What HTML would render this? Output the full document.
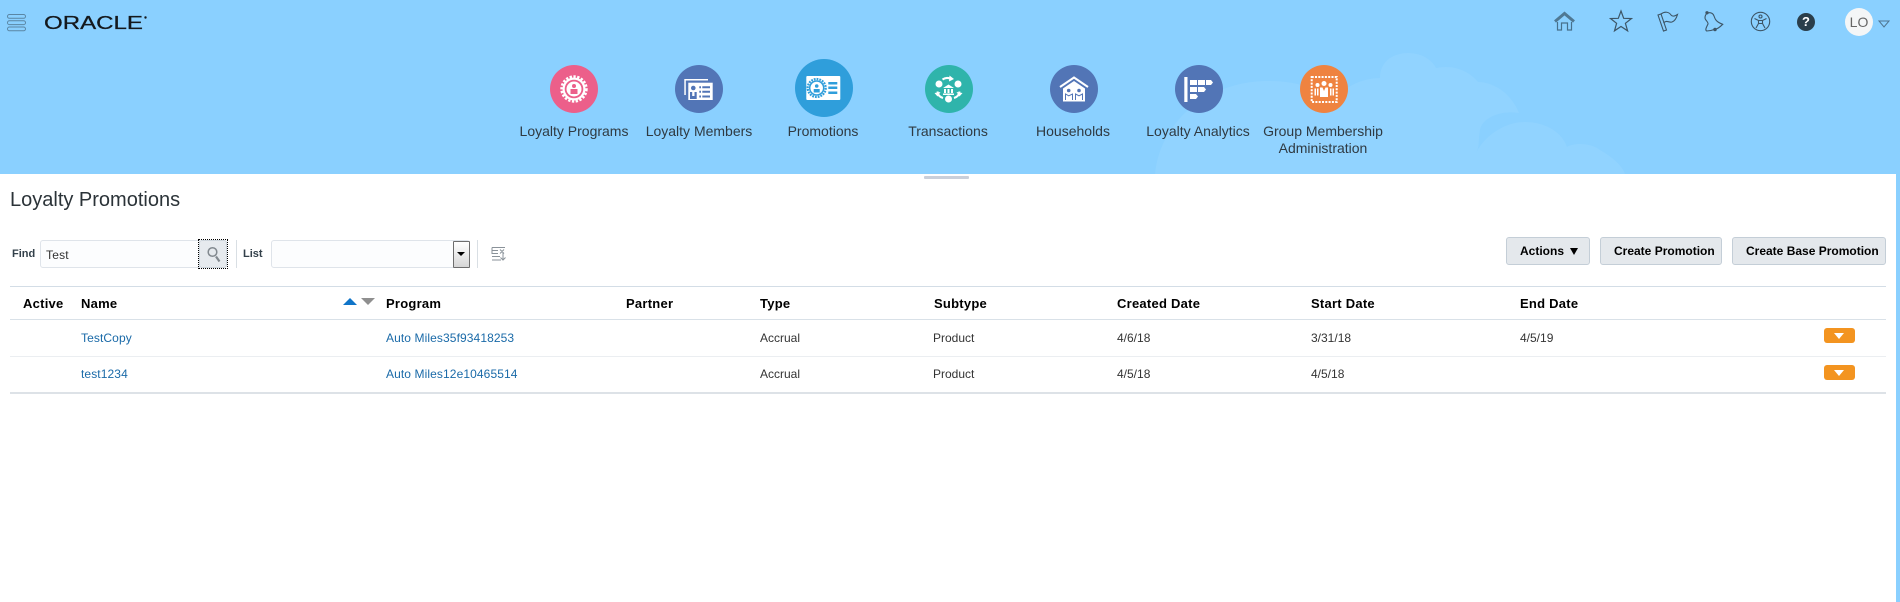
<!DOCTYPE html>
<html><head><meta charset="utf-8"><title>Loyalty Promotions</title>
<style>
html,body{margin:0;padding:0;width:1900px;height:602px;overflow:hidden;background:#fff}
body{position:relative;font-family:"Liberation Sans",Arial,sans-serif;color:#333}
.a{position:absolute;white-space:nowrap}
.nav{position:absolute;top:123px;width:140px;text-align:center;font-size:14px;line-height:17px;color:#2f3a42}
.c{position:absolute;border-radius:50%;width:48px;height:48px;top:65px}
.c svg{position:absolute;left:0;top:0}
.th{position:absolute;top:296px;font-size:13px;letter-spacing:.25px;font-weight:bold;line-height:16px;color:#000;white-space:nowrap}
.td{position:absolute;font-size:12px;line-height:14px;color:#333;white-space:nowrap}
.l{color:#1a6aa8;letter-spacing:.1px}
.hl{position:absolute;left:10px;width:1876px}
.btn{position:absolute;top:237px;height:26px;border:1px solid #c4ced7;border-radius:3px;background:#e4e8ec;font-size:12px;font-weight:bold;color:#000;line-height:26px;text-align:left;white-space:nowrap}
.btn span.t{margin-left:13px}
.mn{position:absolute;left:1824px;width:31px;height:15px;background:#f39420;border-radius:3px}
.mn:after{content:"";position:absolute;left:10px;top:5px;border-left:5.5px solid transparent;border-right:5.5px solid transparent;border-top:6px solid #fff}
</style></head><body>
<div class="a" style="left:0;top:0;width:1900px;height:174px;background:#8ad0ff;overflow:hidden">
<svg width="1900" height="174" style="position:absolute;left:0;top:0">
<path fill="#91d3ff" d="M1155 174C1160 120 1210 81 1268 81C1300 81 1320 90 1335 100C1345 85 1365 78 1380 78C1380 60 1395 53 1408 53C1422 53 1432 60 1436 68C1455 64 1470 72 1478 82C1495 82 1512 95 1519 113C1500 110 1482 118 1480 130C1478 140 1480 146 1476 153C1485 135 1505 122 1525 122C1545 122 1562 132 1567 147C1572 143 1590 142 1600 150C1612 157 1622 165 1625 174Z"/>
</svg>
</div>
<!-- hamburger -->
<svg class="a" style="left:7px;top:14px" width="20" height="18" fill="none" stroke="#5a86a4" stroke-width="1"><rect x=".5" y=".5" width="18" height="3.800" rx="1.900"/><rect x=".5" y="6.800" width="18" height="3.800" rx="1.900"/><rect x=".5" y="13" width="18" height="3.800" rx="1.900"/></svg>
<svg class="a" style="left:43px;top:12px" width="108" height="22"><text x="1" y="17" font-family="Liberation Sans" font-size="18" fill="#14181c" stroke="#14181c" stroke-width=".25" textLength="99" lengthAdjust="spacingAndGlyphs">ORACLE</text><circle cx="102.500" cy="5.500" r="1.200" fill="#14181c"/></svg>
<!-- top icons -->
<svg class="a" style="left:1550px;top:8px" width="30" height="26" fill="none" stroke="#47708c" stroke-width="1.200"><path d="M5 13.500 14.500 5.500 24 13.500" stroke-width="3" stroke="#4f7893"/><path d="M7.500 14v8h4v-7h6v7h4v-8"/></svg>
<svg class="a" style="left:1609px;top:9px" width="24" height="24" fill="none" stroke="#3d5566" stroke-width="1.200"><path d="M12 2l2.700 7.300 7.800.2-6.100 4.800 2.200 7.500-6.600-4.300-6.500 4.300 2.100-7.500-6.100-4.800 7.800-.2z"/></svg>
<svg class="a" style="left:1656px;top:9px" width="26" height="25" fill="none" stroke="#3d5566" stroke-width="1.100"><path d="M2 6 5 5 10.500 21 7.500 22z"/><path d="M5 5C9 2 13 3 15 6C17 8 19 7 21.500 5.500C20.500 9 19 12 16 13C13 14 11 10.500 7.500 14"/></svg>
<svg class="a" style="left:1704px;top:9px" width="24" height="25" fill="none" stroke="#3d5566" stroke-width="1.100"><path d="M3.300 4.300C6 3 9 4 10 7C11 10 12 13 18.700 15.300C16 18 13 20 11 20.300C8 21.500 5 22 2.700 22C1 21 2 19 4 15C4.500 13 1 11 1 9C1 7 2 5 3.300 4.300Z"/><circle cx="3" cy="3.800" r="1.100" fill="#3d5566"/><circle cx="11" cy="20.500" r="1.200" fill="#3d5566"/></svg>
<svg class="a" style="left:1750px;top:11px" width="21" height="21" fill="none" stroke="#3d5566" stroke-width="1.100"><circle cx="10.500" cy="10.500" r="9.200"/><circle cx="10.500" cy="5.500" r="1.500"/><path d="M4.500 7.500 8.500 9.500h4l4-2M8.500 9.500v3l-2.500 4.500M12.500 9.500v3l2.500 4.500M8.500 12.500h4"/></svg>
<div class="a" style="left:1797px;top:13px;width:18px;height:18px;border-radius:50%;background:#2a3e4b;color:#fff;font-size:13px;font-weight:bold;line-height:18px;text-align:center">?</div>
<div class="a" style="left:1845px;top:8px;width:28px;height:28px;border-radius:50%;background:#f4f6f7;color:#666;font-size:14px;line-height:28px;text-align:center">LO</div>
<svg class="a" style="left:1878px;top:20px" width="12" height="8" fill="none" stroke="#4f7590"><path d="M1 1h10L6 7z"/></svg>

<!-- circles -->
<div class="c" style="left:550px;background:#ec5f8a"><svg width="48" height="48"><circle cx="24" cy="24" r="12.300" fill="none" stroke="#fff" stroke-width="2.800" stroke-dasharray="2.300 1.500"/><circle cx="24" cy="24" r="11.500" fill="#fff"/><circle cx="24" cy="24" r="9.300" fill="#ec5f8a"/><circle cx="24" cy="24" r="7.500" fill="#fff"/><circle cx="24" cy="21" r="2" fill="#ec5f8a"/><path d="M20.500 24h7v5h-7z" fill="#ec5f8a"/></svg></div>
<div class="c" style="left:675px;background:#5275b6"><svg width="48" height="48"><path d="M9.300 30V14H33v1.500H10.800V30z" fill="#fff"/><rect x="13.300" y="17.700" width="24.400" height="17.300" fill="#fff"/><circle cx="18.300" cy="23" r="2.300" fill="#5275b6"/><path d="M15 27h2.200v4h2.300v-4h2.200v7H15z" fill="#5275b6"/><path d="M24.300 21.300H26v2h-1.700zM27.300 21.300H35v2h-7.700zM24.300 25.800H26v2h-1.700zM27.300 25.800H35v2h-7.700zM24.300 30.500H26v2h-1.700zM27.300 30.500H35v2h-7.700z" fill="#5275b6"/></svg></div>
<div class="c" style="left:795px;top:59px;width:58px;height:58px;background:#2f9edb"><svg width="58" height="58"><rect x="11.300" y="17" width="34" height="24" rx="1" fill="#fff"/><circle cx="21.700" cy="29" r="9" fill="none" stroke="#2f9edb" stroke-width="2.200" stroke-dasharray="1.800 1"/><circle cx="21.700" cy="29" r="7" fill="none" stroke="#2f9edb" stroke-width="1.500"/><circle cx="21.700" cy="27" r="1.800" fill="#2f9edb"/><path d="M18.700 30h6v3.500h-6z" fill="#2f9edb"/><path d="M33.300 23h9v2.500h-9zM33.300 27.500h9V30h-9zM33.300 32.500h9V35h-9z" fill="#2f9edb"/></svg></div>
<div class="c" style="left:925px;background:#2fb4ab"><svg width="48" height="48"><g fill="#fff"><circle cx="14" cy="19" r="3.500"/><circle cx="33" cy="19" r="3.500"/><circle cx="23.500" cy="34" r="3.500"/><path d="M18 23l5.500-3.500L29 23zM19 24h2v4h-2zM22.500 24h2v4h-2zM26 24h2v4h-2zM18 28.500h11V30H18z"/></g><g fill="none" stroke="#fff" stroke-width="2"><path d="M17.500 14.500Q21 12 25 13.500"/><path d="M12.500 26.500Q13 31.500 18 33"/><path d="M34.500 26.500Q34 31.500 29 33"/></g><g fill="#fff"><path d="M24.500 10.500l4.500 3.500-5 2.500zM9.500 28l6-1-3 4.500zM37.500 28l-6-1 3 4.500z"/></g></svg></div>
<div class="c" style="left:1050px;background:#5275b6"><svg width="48" height="48"><path d="M10 22 24 12.500 38 22" fill="none" stroke="#fff" stroke-width="2"/><path d="M13 23.500 24 16l11 7.500V36.500H13z" fill="#fff"/><g fill="#5275b6"><circle cx="18.700" cy="25.500" r="1.800"/><circle cx="29" cy="25.500" r="1.800"/></g><g fill="none" stroke="#5275b6" stroke-width="1"><path d="M15.500 35V29l3.200 1.800L22.500 29v6M25.500 35V29l3.500 1.800L32.500 29v6"/></g></svg></div>
<div class="c" style="left:1175px;background:#5275b6"><svg width="48" height="48"><g fill="#fff"><path d="M9.300 12h3.200v25H9.300zM15 15h7v5h-7zM23 15h7v5h-7zM31 15h5l2 2.500-2 2.500h-5zM15 22h7v5h-7zM23 22h6l2 2.500-2 2.500h-6zM15 29h6l2 2.500-2 2.500h-6z"/></g></svg></div>
<div class="c" style="left:1300px;background:#ef8340"><svg width="48" height="48"><rect x="11.700" y="12" width="25" height="25" fill="none" stroke="#fff" stroke-width="2" stroke-dasharray="2 1.300"/><g fill="#fff"><circle cx="17.500" cy="20" r="2"/><circle cx="24" cy="18.500" r="2.500"/><circle cx="30.500" cy="20" r="2"/><path d="M14.500 23.500h1.500v7h-1.500zM17 23.500h1.500v7H17zM30 23.500h1.500v7H30zM32.500 23.500H34v7h-1.500z"/><path d="M20 22.500h2.500l1.500 3.500 1.500-3.500H28V32h-8z"/></g></svg></div>

<div class="nav" style="left:504px">Loyalty Programs</div>
<div class="nav" style="left:629px">Loyalty Members</div>
<div class="nav" style="left:753px">Promotions</div>
<div class="nav" style="left:878px">Transactions</div>
<div class="nav" style="left:1003px">Households</div>
<div class="nav" style="left:1128px">Loyalty Analytics</div>
<div class="nav" style="left:1253px">Group Membership<br>Administration</div>

<!-- right strip + splitter -->
<div class="a" style="left:1896px;top:174px;width:4px;height:428px;background:#8ad0ff"></div>
<div class="a" style="left:924px;top:176px;width:45px;height:3px;background:#c9cfda;border-radius:1px"></div>

<div class="a" style="left:10px;top:188px;font-size:20px;line-height:24px;color:#2b3338">Loyalty Promotions</div>

<!-- toolbar -->
<div class="a" style="left:12px;top:247px;font-size:11px;font-weight:bold;line-height:14px;color:#33404a">Find</div>
<div class="a" style="left:40px;top:240px;width:158px;height:26px;border:1px solid #dfe4ea;border-radius:3px 0 0 3px;background:#fcfdfe"></div>
<div class="a" style="left:46px;top:248px;font-size:12px;letter-spacing:.2px;line-height:14px;color:#333">Test</div>
<div class="a" style="left:199px;top:240px;width:26px;height:26px;border:1px solid #cdd5dc;border-radius:3px;background:#e6eaee"></div>
<div class="a" style="left:198px;top:239px;width:28px;height:28px;border:1px dotted #000"></div>
<svg class="a" style="left:206px;top:246px" width="16" height="18" fill="none" stroke="#82898f"><circle cx="6.500" cy="6" r="4.300" stroke-width="1.500"/><path d="M10 10.500l3.500 5" stroke-width="2.200"/></svg>
<div class="a" style="left:236px;top:240px;width:1px;height:28px;background:#d9dfe4"></div>
<div class="a" style="left:243px;top:247px;font-size:11px;font-weight:bold;line-height:14px;color:#33404a">List</div>
<div class="a" style="left:271px;top:240px;width:197px;height:26px;border:1px solid #dfe4ea;border-radius:3px;background:#fcfdfe"></div>
<div class="a" style="left:453px;top:241px;width:15px;height:25px;border:1px solid #6d6d6d;border-radius:1px;background:linear-gradient(#fff,#d6d6d6)"></div>
<div class="a" style="left:457px;top:252px;border-left:4px solid transparent;border-right:4px solid transparent;border-top:4px solid #000"></div>
<div class="a" style="left:477px;top:240px;width:1px;height:28px;background:#d9dfe4"></div>
<svg class="a" style="left:491px;top:246px" width="16" height="16" fill="none" stroke="#8a9299"><path d="M1 1.500h13M1 1.500v6h6M1 4.500h6M1 7.500h5M1 10.500h8M1 14h9M12 7v7M9.500 11.500 12 14l2.500-2.500M9 3.500l4 4M13 3.500l-4 4"/></svg>

<div class="btn" style="left:1506px;width:82px"><span class="t">Actions</span><span style="position:absolute;left:63px;top:10px;border-left:4.500px solid transparent;border-right:4.500px solid transparent;border-top:7px solid #000"></span></div>
<div class="btn" style="left:1600px;width:120px"><span class="t">Create Promotion</span></div>
<div class="btn" style="left:1732px;width:152px"><span class="t">Create Base Promotion</span></div>

<!-- table -->
<div class="hl" style="top:286px;height:1px;background:#d3dde6"></div>
<div class="hl" style="top:319px;height:1px;background:#d9e1e8"></div>
<div class="hl" style="top:356px;height:1px;background:#ebeef1"></div>
<div class="hl" style="top:392px;height:2px;background:#dde2e7"></div>

<div class="th" style="left:23px">Active</div>
<div class="th" style="left:81px">Name</div>
<div class="a" style="left:343px;top:298px;border-left:7px solid transparent;border-right:7px solid transparent;border-bottom:7px solid #0f74c8"></div>
<div class="a" style="left:361px;top:298px;border-left:7px solid transparent;border-right:7px solid transparent;border-top:7px solid #8f8f8f"></div>
<div class="th" style="left:386px">Program</div>
<div class="th" style="left:626px">Partner</div>
<div class="th" style="left:760px">Type</div>
<div class="th" style="left:934px">Subtype</div>
<div class="th" style="left:1117px">Created Date</div>
<div class="th" style="left:1311px">Start Date</div>
<div class="th" style="left:1520px">End Date</div>

<div class="td l" style="left:81px;top:331px">TestCopy</div>
<div class="td l" style="left:386px;top:331px">Auto Miles35f93418253</div>
<div class="td" style="left:760px;top:331px">Accrual</div>
<div class="td" style="left:933px;top:331px">Product</div>
<div class="td" style="left:1117px;top:331px">4/6/18</div>
<div class="td" style="left:1311px;top:331px">3/31/18</div>
<div class="td" style="left:1520px;top:331px">4/5/19</div>
<div class="mn" style="top:328px"></div>

<div class="td l" style="left:81px;top:367px">test1234</div>
<div class="td l" style="left:386px;top:367px">Auto Miles12e10465514</div>
<div class="td" style="left:760px;top:367px">Accrual</div>
<div class="td" style="left:933px;top:367px">Product</div>
<div class="td" style="left:1117px;top:367px">4/5/18</div>
<div class="td" style="left:1311px;top:367px">4/5/18</div>
<div class="mn" style="top:365px"></div>
</body></html>
